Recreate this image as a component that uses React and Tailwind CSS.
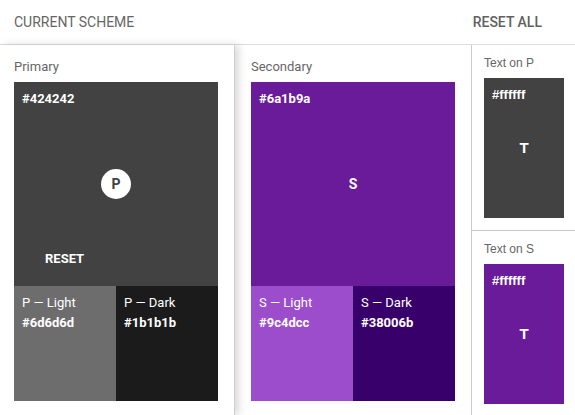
import React from 'react';

const font = { fontFamily: 'Roboto, "Liberation Sans", sans-serif' };
const arial = { fontFamily: '"Liberation Sans", Arial, sans-serif' };

const Sub = ({ label, hex, bg }) => (
  <div className={`flex-1 h-full px-[8px] pt-[9px] text-white ${bg}`}>
    <div className="text-[13px] leading-[16px]">{label}</div>
    <div className="text-[13px] leading-[16px] font-bold mt-[4px]">{hex}</div>
  </div>
);

const SchemeColumn = ({ title, hex, bg, letter, circle, reset, light, dark, className }) => (
  <div className={className}>
    <div className="text-[13px] leading-[16px] text-[#666666] mb-[7px]">{title}</div>
    <div className="w-[204px]">
      <div className={`relative h-[204px] ${bg} text-white`}>
        <div className="absolute left-[8px] top-[9px] text-[13px] font-bold leading-[16px]">{hex}</div>
        <div className="h-full flex items-center justify-center">
          {circle ? (
            <div className="w-[30px] h-[30px] rounded-full bg-white text-[#424242] flex items-center justify-center text-[14px] font-bold">
              {letter}
            </div>
          ) : (
            <span className="text-[14px] font-bold">{letter}</span>
          )}
        </div>
        {reset && (
          <div className="absolute left-[31px] top-[169px] text-[13px] font-bold leading-[16px]">RESET</div>
        )}
      </div>
      <div className="flex h-[115px]">
        <Sub {...light} />
        <Sub {...dark} />
      </div>
    </div>
  </div>
);

const TextSwatch = ({ title, bg, className }) => (
  <div className={className} style={arial}>
    <div className="text-[12px] leading-[14px] text-[#666666] mb-[8px]">{title}</div>
    <div className={`relative w-[80px] h-[140px] ${bg} text-white`}>
      <div className="absolute left-[8px] top-[9px] text-[13px] font-bold leading-[15px]">#ffffff</div>
      <div className="h-full flex items-center justify-center text-[15px] font-bold">T</div>
    </div>
  </div>
);

export default function App() {
  return (
    <div className="w-[575px] h-[415px] bg-white overflow-hidden" style={font}>
      <div className="h-[45px] flex items-center justify-between px-[14px] border-b border-[#dddddd]">
        <div className="text-[14px] text-[#666666] uppercase">Current Scheme</div>
        <div className="text-[14px] text-[#616161] font-medium uppercase pr-[19px]">Reset All</div>
      </div>
      <div className="flex h-[370px]">
        <SchemeColumn
          className="relative z-10 w-[235px] h-full pl-[14px] pt-[14px] bg-white border-r border-[#d0d0d0] shadow-[4px_0_8px_rgba(0,0,0,0.15)]"
          title="Primary"
          hex="#424242"
          bg="bg-[#424242]"
          letter="P"
          circle
          reset
          light={{ label: 'P — Light', hex: '#6d6d6d', bg: 'bg-[#6d6d6d]' }}
          dark={{ label: 'P — Dark', hex: '#1b1b1b', bg: 'bg-[#1b1b1b]' }}
        />
        <SchemeColumn
          className="w-[237px] h-full pl-[16px] pt-[14px] border-r border-[#cccccc]"
          title="Secondary"
          hex="#6a1b9a"
          bg="bg-[#6a1b9a]"
          letter="S"
          light={{ label: 'S — Light', hex: '#9c4dcc', bg: 'bg-[#9c4dcc]' }}
          dark={{ label: 'S — Dark', hex: '#38006b', bg: 'bg-[#38006b]' }}
        />
        <div className="flex-1 flex flex-col">
          <TextSwatch
            className="h-[186px] pl-[12px] pt-[11px] border-b border-[#cccccc]"
            title="Text on P"
            bg="bg-[#424242]"
          />
          <TextSwatch className="pl-[12px] pt-[11px]" title="Text on S" bg="bg-[#6a1b9a]" />
        </div>
      </div>
    </div>
  );
}
